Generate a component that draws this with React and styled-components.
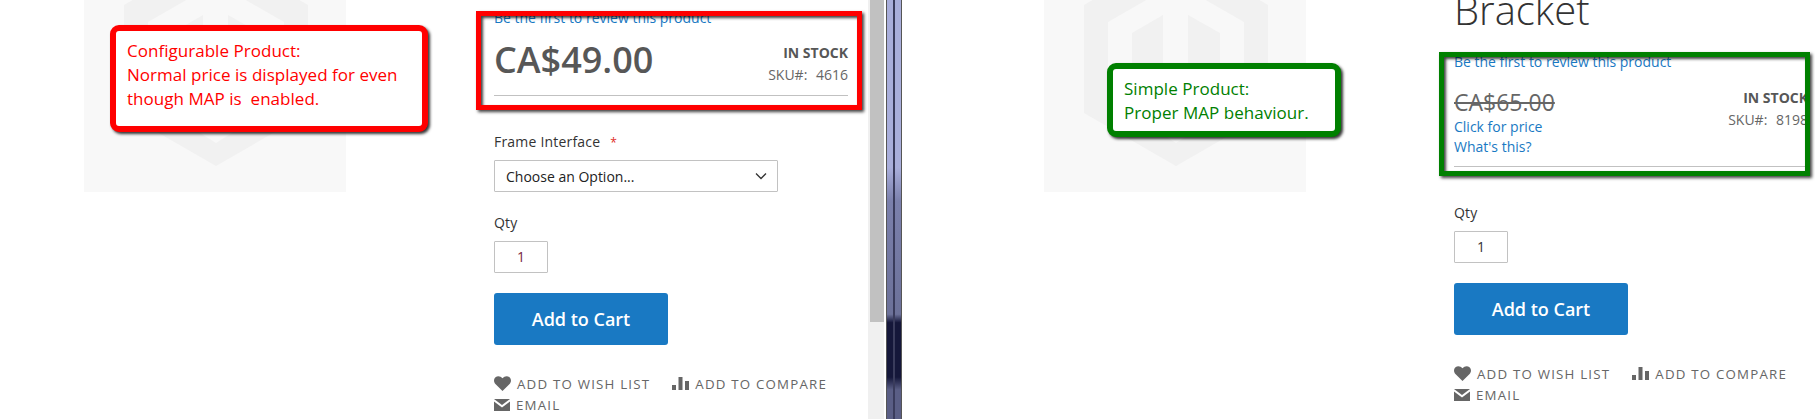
import { createGlobalStyle, styled } from 'styled-components';

const GlobalStyle = createGlobalStyle`
  html, body {
    margin: 0;
    padding: 0;
    background: #fff;
    overflow: hidden;
  }
  body {
    font-family: "Open Sans", "Noto Sans", sans-serif;
    font-size: 14px;
    color: #333;
  }
`;

const Page = styled.div`
  display: flex;
  width: 1815px;
  height: 419px;
  overflow: hidden;
`;

const Pane = styled.section`
  position: relative;
  display: flex;
  flex: ${({ $width }) => `0 0 ${$width}px`};
  overflow: hidden;
  background: #fff;
`;

const Gallery = styled.div`
  flex: 0 0 auto;
  width: 262px;
  height: 192px;
  margin-left: ${({ $left }) => $left}px;
  background: #f8f8f8;
  overflow: hidden;
`;

const Info = styled.div`
  flex: 0 0 auto;
  width: ${({ $width }) => $width}px;
  margin-left: 148px;
  overflow: hidden;
`;

const Title = styled.h1`
  margin: -15px 0 0;
  font-size: 40px;
  line-height: 50px;
  font-weight: 300;
  color: #333;
`;

const ReviewLink = styled.a`
  display: block;
  margin-top: ${({ $top }) => $top}px;
  font-size: 14px;
  line-height: 20px;
  color: #1979c3;
`;

const PriceRow = styled.div`
  display: flex;
  justify-content: space-between;
  width: 354px;
  margin-top: ${({ $top }) => $top}px;
  padding-bottom: ${({ $bottom }) => $bottom}px;
  border-bottom: 1px solid #c1c1c1;
`;

const Price = styled.div`
  font-size: 36px;
  line-height: 44px;
  font-weight: 600;
  color: #575757;
`;

const OldPrice = styled.div`
  font-size: 23px;
  line-height: 28px;
  color: #666;
  text-decoration: line-through;
  margin: 3px 0 1px;
`;

const MapLink = styled.a`
  display: block;
  font-size: 14px;
  line-height: 20px;
  color: #1979c3;
`;

const Stock = styled.div`
  text-align: right;
  padding-top: ${({ $top }) => $top}px;
`;

const StockLabel = styled.div`
  font-size: 14px;
  line-height: 20px;
  font-weight: 700;
  color: #575757;
`;

const Sku = styled.div`
  margin-top: 2px;
  font-size: 14px;
  line-height: 20px;
  color: #666;
  word-spacing: 5px;
`;

const FieldLabel = styled.label`
  display: block;
  font-size: 14px;
  line-height: 20px;
  font-weight: 500;
  letter-spacing: 0.2px;
  color: #333;
  margin-top: ${({ $top }) => $top}px;
`;

const Required = styled.span`
  color: #e02b27;
  margin-left: 10px;
  font-size: 12px;
`;

const Select = styled.div`
  display: flex;
  align-items: center;
  justify-content: space-between;
  box-sizing: border-box;
  width: 284px;
  height: 32px;
  margin-top: 7px;
  padding: 0 10px 0 11px;
  border: 1px solid #c2c2c2;
  border-radius: 1px;
  font-size: 14px;
  color: #222;
`;

const QtyInput = styled.div`
  box-sizing: border-box;
  width: 54px;
  height: 32px;
  margin-top: 8px;
  border: 1px solid #c2c2c2;
  border-radius: 1px;
  text-align: center;
  font-size: 14px;
  line-height: 30px;
  color: ${({ $tint }) => $tint};
`;

const CartButton = styled.button`
  display: block;
  width: 174px;
  height: 52px;
  margin-top: 20px;
  padding: 0;
  border: 0;
  border-radius: 3px;
  background: #1979c3;
  color: #fff;
  font-family: inherit;
  font-size: 18px;
  font-weight: 600;
`;

const Actions = styled.div`
  display: flex;
  flex-wrap: wrap;
  width: 354px;
  margin-top: 28px;
  column-gap: 22px;
`;

const Action = styled.a`
  display: flex;
  align-items: center;
  gap: 6px;
  height: 21px;
  font-size: 13.3px;
  font-weight: 500;
  letter-spacing: 1.2px;
  text-transform: uppercase;
  color: #666;
`;

const Callout = styled.div`
  position: absolute;
  box-sizing: border-box;
  left: ${({ $x }) => $x}px;
  top: ${({ $y }) => $y}px;
  width: ${({ $w }) => $w}px;
  height: ${({ $h }) => $h}px;
  padding: 8px 11px;
  border: 6px solid ${({ $color }) => $color};
  border-radius: 9px;
  background: #fff;
  box-shadow: 2px 2px 3px rgba(0, 0, 0, 0.8);
  color: ${({ $color }) => $color};
  font-size: 17px;
  line-height: 24px;
  letter-spacing: 0.03px;
`;

const Frame = styled.div`
  position: absolute;
  box-sizing: border-box;
  left: ${({ $x }) => $x}px;
  top: ${({ $y }) => $y}px;
  width: ${({ $w }) => $w}px;
  height: ${({ $h }) => $h}px;
  border: 5px solid ${({ $color }) => $color};
  box-shadow: 2px 2px 3px rgba(0, 0, 0, 0.75), inset 2px 2px 3px rgba(0, 0, 0, 0.75);
`;

const Scrollbar = styled.div`
  position: absolute;
  top: 0;
  right: 2px;
  width: 16px;
  height: 419px;
  background: #f0f0f0;
`;

const ScrollThumb = styled.div`
  width: 14px;
  height: 322px;
  margin-left: 2px;
  background: #c1c1c1;
`;

const Divider = styled.div`
  flex: 0 0 16px;
  background: linear-gradient(
    180deg,
    #a9aedb 0%,
    #a9aedb 40%,
    #7b80ac 48%,
    #6c7199 75%,
    #15173a 77%,
    #15173a 90%,
    #5a5e85 93%,
    #5a5e85 100%
  );
  border-left: 1px solid #555;
  border-right: 1px solid #555;
  box-sizing: border-box;
  position: relative;

  &::after {
    content: '';
    position: absolute;
    top: 0;
    bottom: 0;
    left: 6px;
    width: 2px;
    background: #3a3c5c;
  }
`;

function PlaceholderLogo() {
  return (
    <svg width="262" height="192" viewBox="0 0 262 192">
      <path d="M40 5 L132 -48 L224 5 V113 L132 166 L40 113 Z" fill="#f1f1f1" />
      <path d="M64 22 L132 -17 L200 22 V100 L132 143 L64 100 Z" fill="#f8f8f8" />
      <path d="M88 33 L119 15 V120 L88 102 Z M144 15 L176 33 V102 L144 120 Z" fill="#f1f1f1" />
    </svg>
  );
}

function HeartIcon() {
  return (
    <svg width="17" height="15" viewBox="0 0 17 15">
      <path d="M8.5 15 L1.4 8 C-0.5 6 -0.4 2.8 1.5 1.2 C3.5 -0.5 6.6 -0.2 8.5 2.3 C10.4 -0.2 13.5 -0.5 15.5 1.2 C17.4 2.8 17.5 6 15.6 8 Z" fill="#666" />
    </svg>
  );
}

function CompareIcon() {
  return (
    <svg width="17" height="13" viewBox="0 0 17 13">
      <path d="M0 8h4v5H0z M6.5 0h4v13h-4z M13 4h4v9h-4z" fill="#666" />
    </svg>
  );
}

function MailIcon() {
  return (
    <svg width="16" height="12" viewBox="0 0 16 12">
      <path d="M0 0h16L8 6z M0 2.5 L8 8.5 L16 2.5 V12 H0z" fill="#666" />
    </svg>
  );
}

function Chevron() {
  return (
    <svg width="12" height="8" viewBox="0 0 12 8">
      <path d="M1 1.5 L6 6.5 L11 1.5" fill="none" stroke="#333" strokeWidth="1.3" />
    </svg>
  );
}

function ProductActions() {
  return (
    <Actions>
      <Action><HeartIcon />Add to Wish List</Action>
      <Action><CompareIcon />Add to Compare</Action>
      <Action><MailIcon />Email</Action>
    </Actions>
  );
}

export default function App() {
  return (
    <Page>
      <GlobalStyle />
      <Pane $width={886}>
        <Gallery $left={84}>
          <PlaceholderLogo />
        </Gallery>
        <Info $width={370}>
          <ReviewLink $top={8}>Be the first to review this product</ReviewLink>
          <PriceRow $top={10} $bottom={10}>
            <Price>CA$49.00</Price>
            <Stock $top={5}>
              <StockLabel>IN STOCK</StockLabel>
              <Sku>SKU#: 4616</Sku>
            </Stock>
          </PriceRow>
          <FieldLabel $top={36}>
            Frame Interface<Required>*</Required>
          </FieldLabel>
          <Select>
            Choose an Option...
            <Chevron />
          </Select>
          <FieldLabel $top={21}>Qty</FieldLabel>
          <QtyInput $tint="#7a1f3d">1</QtyInput>
          <CartButton>Add to Cart</CartButton>
          <ProductActions />
        </Info>
        <Callout $x={110} $y={25} $w={318} $h={107} $color="#ff0000">
          Configurable Product:
          <br />
          Normal price is displayed for even
          <br />
          though MAP is&nbsp; enabled.
        </Callout>
        <Frame $x={476} $y={11} $w={386} $h={99} $color="#ff0000" />
        <Scrollbar>
          <ScrollThumb />
        </Scrollbar>
      </Pane>
      <Divider />
      <Pane $width={913}>
        <Gallery $left={142}>
          <PlaceholderLogo />
        </Gallery>
        <Info $width={352}>
          <Title>Bracket</Title>
          <ReviewLink $top={17}>Be the first to review this product</ReviewLink>
          <PriceRow $top={13} $bottom={9}>
            <div>
              <OldPrice>CA$65.00</OldPrice>
              <MapLink>Click for price</MapLink>
              <MapLink>What's this?</MapLink>
            </div>
            <Stock $top={3}>
              <StockLabel>IN STOCK</StockLabel>
              <Sku>SKU#: 8198</Sku>
            </Stock>
          </PriceRow>
          <FieldLabel $top={36}>Qty</FieldLabel>
          <QtyInput $tint="#333">1</QtyInput>
          <CartButton>Add to Cart</CartButton>
          <ProductActions />
        </Info>
        <Callout $x={205} $y={63} $w={234} $h={74} $color="#008000">
          Simple Product:
          <br />
          Proper MAP behaviour.
        </Callout>
        <Frame $x={537} $y={52} $w={371} $h={124} $color="#008000" />
      </Pane>
    </Page>
  );
}
